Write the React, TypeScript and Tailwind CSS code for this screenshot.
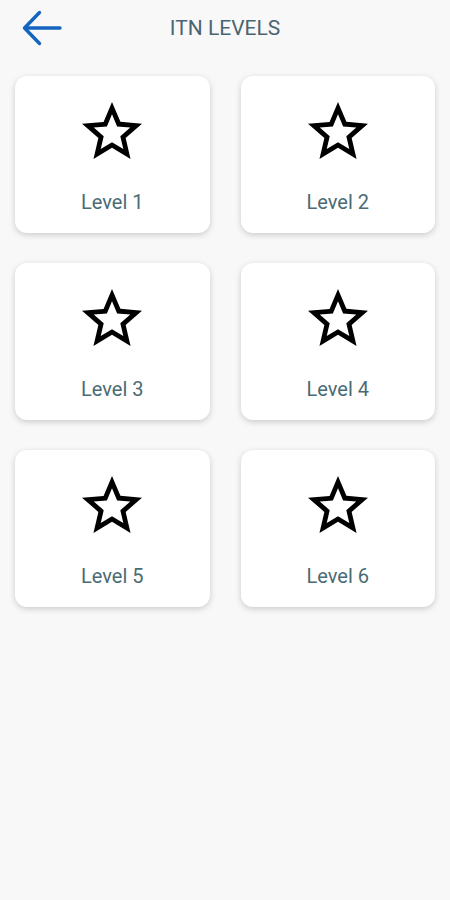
import React from 'react';

const levels = [1, 2, 3, 4, 5, 6];

const StarBorder: React.FC = () => (
  <svg className="w-[72px] h-[72px]" viewBox="0 0 24 24" fill="#000">
    <path d="M22 9.24l-7.19-.62L12 2 9.19 8.63 2 9.24l5.46 4.73L5.82 21 12 17.27 18.18 21l-1.63-7.03L22 9.24zM12 15.4l-3.76 2.27 1-4.28-3.32-2.88 4.38-.38L12 6.1l1.71 4.04 4.38.38-3.32 2.88 1 4.28L12 15.4z" />
  </svg>
);

const App: React.FC = () => {
  return (
    <div className="w-[450px] h-[900px] bg-[#f8f8f8] font-['Roboto',sans-serif] flex flex-col">
      {/* Top Bar */}
      <div className="h-[56px] flex items-center relative">
        <button className="absolute left-[22px] top-[10px] w-[40px] h-[36px] flex items-center">
          <svg className="w-[40px] h-[36px]" viewBox="0 0 40 36" fill="none" stroke="#1565c0" strokeWidth="3.4" strokeLinecap="round" strokeLinejoin="round">
            <path d="M38 18H3M17.5 2.5L2.5 18l15 15.5" />
          </svg>
        </button>
        <div className="flex-1 text-center text-[21px] text-[#4a6572] pt-[1px]">ITN LEVELS</div>
      </div>

      {/* Levels grid */}
      <div className="grid grid-cols-2 gap-x-[31px] gap-y-[30px] px-[15px] pt-[20px]">
        {levels.map((n) => (
          <div key={n} className="h-[157px] bg-white rounded-[12px] shadow-[0_2px_6px_rgba(0,0,0,0.18)] flex flex-col items-center pt-[20px]">
            <StarBorder />
            <div className="mt-[24px] text-[20px] text-[#4a6b74] leading-none">Level {n}</div>
          </div>
        ))}
      </div>
    </div>
  );
};

export default App;
